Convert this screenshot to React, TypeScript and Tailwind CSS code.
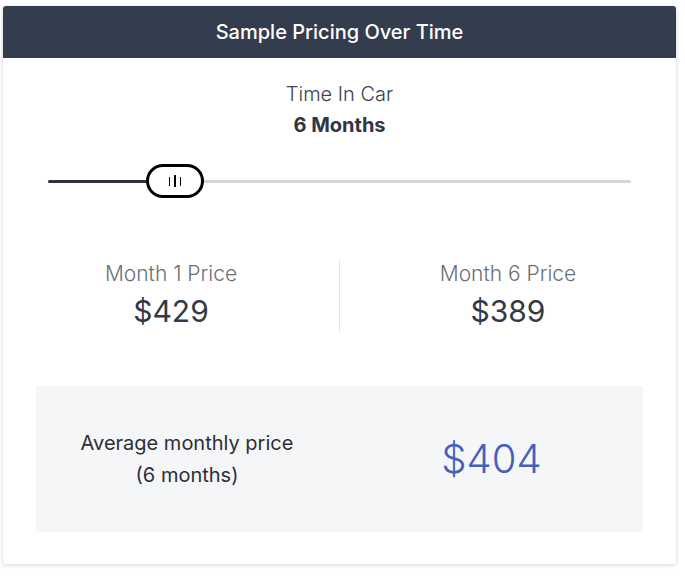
import React from "react";

export default function App() {
  return (
    <div className="w-[685px] h-[578px] bg-white pt-[6px] pl-[3px]" style={{ fontFamily: "Inter, 'Noto Sans', sans-serif" }}>
      <div className="w-[673px] h-[558px] bg-white rounded-[3px] shadow-[0_1px_4px_rgba(0,0,0,0.18)] flex flex-col">
        <div className="h-[52px] bg-[#343d4e] rounded-t-[3px] flex items-center justify-center text-white text-[20px] font-medium">
          Sample Pricing Over Time
        </div>
        <div className="flex flex-col items-center pt-[22px]">
          <div className="text-[20px] text-[#3b4250] font-light leading-[28px]">Time In Car</div>
          <div className="text-[20px] text-[#2f3542] font-bold leading-[28px] mt-[3px]">6 Months</div>
        </div>
        <div className="relative mx-[45px] mt-[25px] h-[34px] flex items-center">
          <div className="w-full h-[3px] bg-[#d6d6d6] rounded-full"></div>
          <div className="absolute left-0 w-[100px] h-[3px] bg-[#2d3440] rounded-full"></div>
          <div className="absolute left-[98px] top-0 w-[58px] h-[34px] rounded-full border-[3px] border-black bg-white flex items-center justify-center gap-[4px]">
            <div className="w-[1.5px] h-[9px] bg-black"></div>
            <div className="w-[1.5px] h-[12px] bg-black"></div>
            <div className="w-[1.5px] h-[9px] bg-black"></div>
          </div>
        </div>
        <div className="flex mt-[62px] h-[72px]">
          <div className="flex-1 flex flex-col items-center">
            <div className="text-[21px] text-[#6b6f76] leading-[28px] font-light">Month 1 Price</div>
            <div className="text-[30px] text-[#333a45] leading-[40px] mt-[3px]">$429</div>
          </div>
          <div className="w-px bg-[#e2e2e2]"></div>
          <div className="flex-1 flex flex-col items-center">
            <div className="text-[21px] text-[#6b6f76] leading-[28px] font-light">Month 6 Price</div>
            <div className="text-[30px] text-[#333a45] leading-[40px] mt-[3px]">$389</div>
          </div>
        </div>
        <div className="mx-[33px] mt-[54px] h-[146px] bg-[#f5f6f8] flex items-center">
          <div className="w-[302px] flex flex-col items-center text-[20px] text-[#2c2f36] leading-[32px]">
            <div>Average monthly price</div>
            <div>(6 months)</div>
          </div>
          <div className="flex-1 flex justify-center text-[40px] text-[#4560b8] font-light pl-[2px]">$404</div>
        </div>
      </div>
    </div>
  );
}
